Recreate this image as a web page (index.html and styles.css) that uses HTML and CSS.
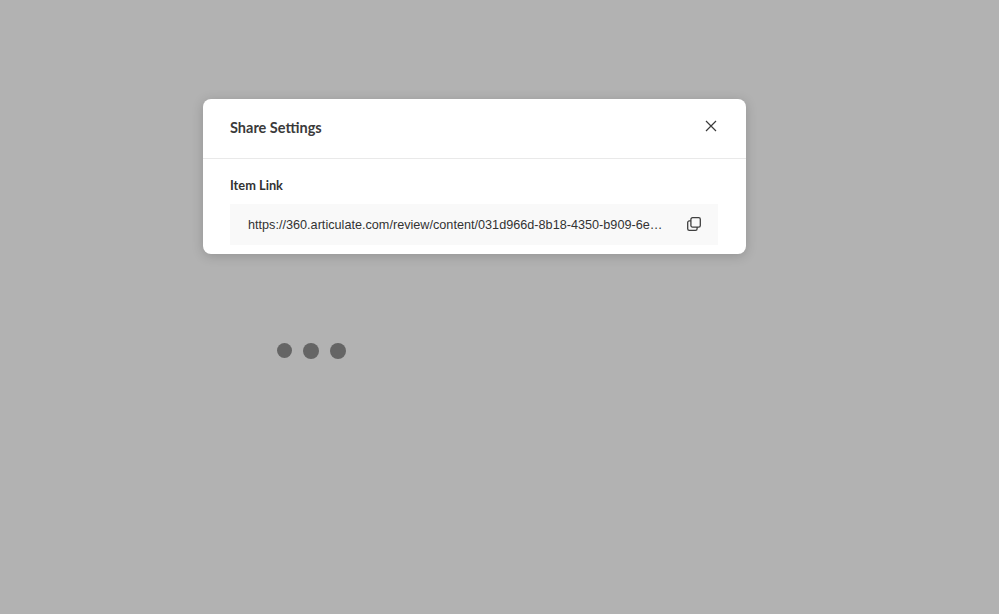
FILE: index.html
```html
<!DOCTYPE html>
<html lang="en">
<head>
<meta charset="utf-8">
<title>Share Settings</title>
<link rel="stylesheet" href="styles.css">
</head>
<body>
<main class="page">
  <section class="modal">
    <header class="modal-header">
      <h2 class="modal-title">Share Settings</h2>
      <button class="close" aria-label="Close">
        <svg width="12" height="12" viewBox="0 0 12 12"><path d="M1 1L11 11M11 1L1 11" fill="none" stroke="#3a3a3a" stroke-width="1.2"/></svg>
      </button>
    </header>
    <div class="modal-body">
      <div class="label">Item Link</div>
      <div class="link-field">
        <span class="link-text">https://360.articulate.com/review/content/031d966d-8b18-4350-b909-6e…</span>
        <svg class="copy" width="14" height="14" viewBox="0 0 14 14" fill="none" stroke="#3f3f3f" stroke-width="1.3">
          <rect x="3.9" y="0.7" width="9.4" height="9.4" rx="1.6"/>
          <path d="M3.9 3.9H2.3A1.6 1.6 0 0 0 .7 5.5v6.2a1.6 1.6 0 0 0 1.6 1.6h6.2a1.6 1.6 0 0 0 1.6-1.6v-1.6"/>
        </svg>
      </div>
    </div>
  </section>
  <div class="dots">
    <span class="dot dot-small"></span>
    <span class="dot"></span>
    <span class="dot"></span>
  </div>
</main>
</body>
</html>
```

FILE: styles.css
```css
* { box-sizing: border-box; }
html, body { margin: 0; height: 100%; }
body { background: #b2b2b2; overflow: hidden; }
.page { padding: 99px 0 0 203px; }
.modal {
  width: 542.5px;
  height: 155px;
  background: #fff;
  border-radius: 8px;
  box-shadow: 0 2px 12px rgba(0, 0, 0, 0.18);
  overflow: hidden;
}
.modal-header {
  height: 60px;
  padding: 0 29px 0 27px;
  display: flex;
  justify-content: space-between;
  border-bottom: 1px solid #e9e9e9;
}
.modal-title {
  margin: 20px 0 0;
  font: 700 14.5px/18px Lato, sans-serif;
  color: #3a3a3a;
}
.close {
  margin: 21px 0 0;
  padding: 0;
  width: 12px;
  height: 12px;
  border: 0;
  background: none;
  display: flex;
}
.modal-body { padding: 18px 27px 0; }
.label {
  font: 700 12.8px/16px Lato, sans-serif;
  color: #333;
  margin-bottom: 11px;
}
.link-field {
  width: 488px;
  height: 41px;
  padding: 0 17.5px 0 18px;
  background: #f9f9f9;
  display: flex;
  align-items: center;
  justify-content: space-between;
}
.link-text {
  font: 12.66px/18px "Liberation Sans", Arial, sans-serif;
  color: #333;
  white-space: nowrap;
}
.copy { margin-top: -1px; }
.dots {
  display: flex;
  align-items: center;
  gap: 11px;
  margin: 88.5px 0 0 73.5px;
}
.dot {
  width: 16px;
  height: 16px;
  border-radius: 50%;
  background: #656565;
}
.dot-small { width: 15.5px; height: 15.5px; }
```
